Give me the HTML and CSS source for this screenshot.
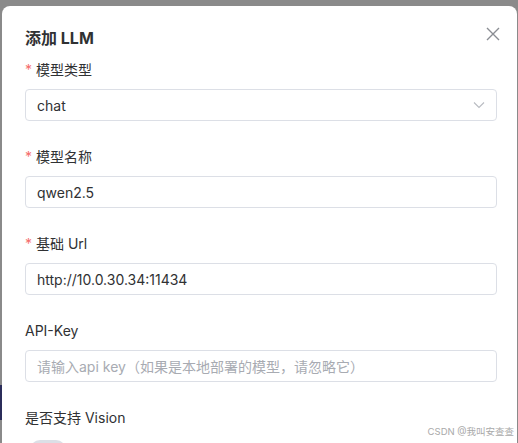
FILE: index.html
```html
<!DOCTYPE html>
<html lang="zh-CN">
<head>
<meta charset="utf-8">
<link rel="stylesheet" href="styles.css">
</head>
<body>
<div class="backdrop">
  <div class="side-mark"></div>
  <div class="dialog">
    <div class="dialog-header">
      <span class="dialog-title">添加 LLM</span>
      <button class="close-btn" aria-label="关闭">
        <svg width="14" height="14" viewBox="0 0 14 14"><path d="M1 1 L13 13 M13 1 L1 13" stroke="#8a8d93" stroke-width="1.4" fill="none"/></svg>
      </button>
    </div>
    <div class="form">
      <div class="form-item">
        <label class="form-label"><span class="req">*</span>模型类型</label>
        <div class="input select">
          <span class="value">chat</span>
          <svg class="arrow" width="12" height="8" viewBox="0 0 12 8"><path d="M1 1.5 L6 6.5 L11 1.5" stroke="#b8bbc1" stroke-width="1.1" fill="none"/></svg>
        </div>
      </div>
      <div class="form-item">
        <label class="form-label"><span class="req">*</span>模型名称</label>
        <div class="input"><span class="value">qwen2.5</span></div>
      </div>
      <div class="form-item">
        <label class="form-label"><span class="req">*</span>基础 Url</label>
        <div class="input"><span class="value">http://10.0.30.34:11434</span></div>
      </div>
      <div class="form-item">
        <label class="form-label">API-Key</label>
        <div class="input"><span class="placeholder">请输入api key（如果是本地部署的模型，请忽略它）</span></div>
      </div>
      <div class="form-item">
        <label class="form-label">是否支持 Vision</label>
        <div class="switch-row"><span class="switch"></span></div>
      </div>
    </div>
  </div>
  <div class="watermark">CSDN @我叫安查查</div>
</div>
</body>
</html>
```
FILE: styles.css
```css
* { box-sizing: border-box; }
html, body { margin: 0; padding: 0; }
body {
  width: 518px;
  height: 443px;
  overflow: hidden;
  font-family: Inter, "Noto Sans CJK SC", sans-serif;
  background: #8a8a8a;
}
.backdrop {
  position: relative;
  width: 518px;
  height: 443px;
  padding: 6px 1px 0 2px;
  overflow: hidden;
}
.side-mark {
  position: absolute;
  left: 0;
  top: 385px;
  width: 2px;
  height: 35px;
  background: #2b2d5a;
}
.dialog {
  background: #fff;
  border-radius: 8px 8px 0 0;
  height: 460px;
  padding: 20px 20px 0 23px;
}
.dialog-header {
  display: flex;
  justify-content: space-between;
  align-items: flex-start;
  height: 33px;
}
.dialog-title {
  font-size: 16px;
  line-height: 24px;
  font-weight: 700;
  color: #303133;
}
.close-btn {
  border: 0;
  background: none;
  padding: 0;
  margin: 1px -3px 0 0;
  width: 14px;
  height: 14px;
  display: flex;
}
.form-item { margin-bottom: 25px; }
.form-label {
  display: block;
  font-size: 14px;
  line-height: 22px;
  color: #303133;
  padding-bottom: 8px;
}
.req {
  color: #f56c6c;
  margin-right: 4px;
}
.input {
  height: 32px;
  border: 1px solid #dcdfe6;
  border-radius: 4px;
  padding: 0 11px;
  display: flex;
  align-items: center;
  font-size: 14px;
}
.value { color: #303133; }
.placeholder { color: #a8abb2; }
.select { justify-content: space-between; }
.switch-row {
  height: 32px;
  display: flex;
  align-items: flex-start;
  padding-top: 3px;
}
.switch {
  display: block;
  margin-left: 5px;
  width: 36px;
  height: 20px;
  border-radius: 10px;
  background: #dcdfe6;
}
.watermark {
  position: absolute;
  right: 4px;
  top: 425px;
  font-size: 9.5px;
  line-height: 14px;
  color: #a9a9a9;
}
```
